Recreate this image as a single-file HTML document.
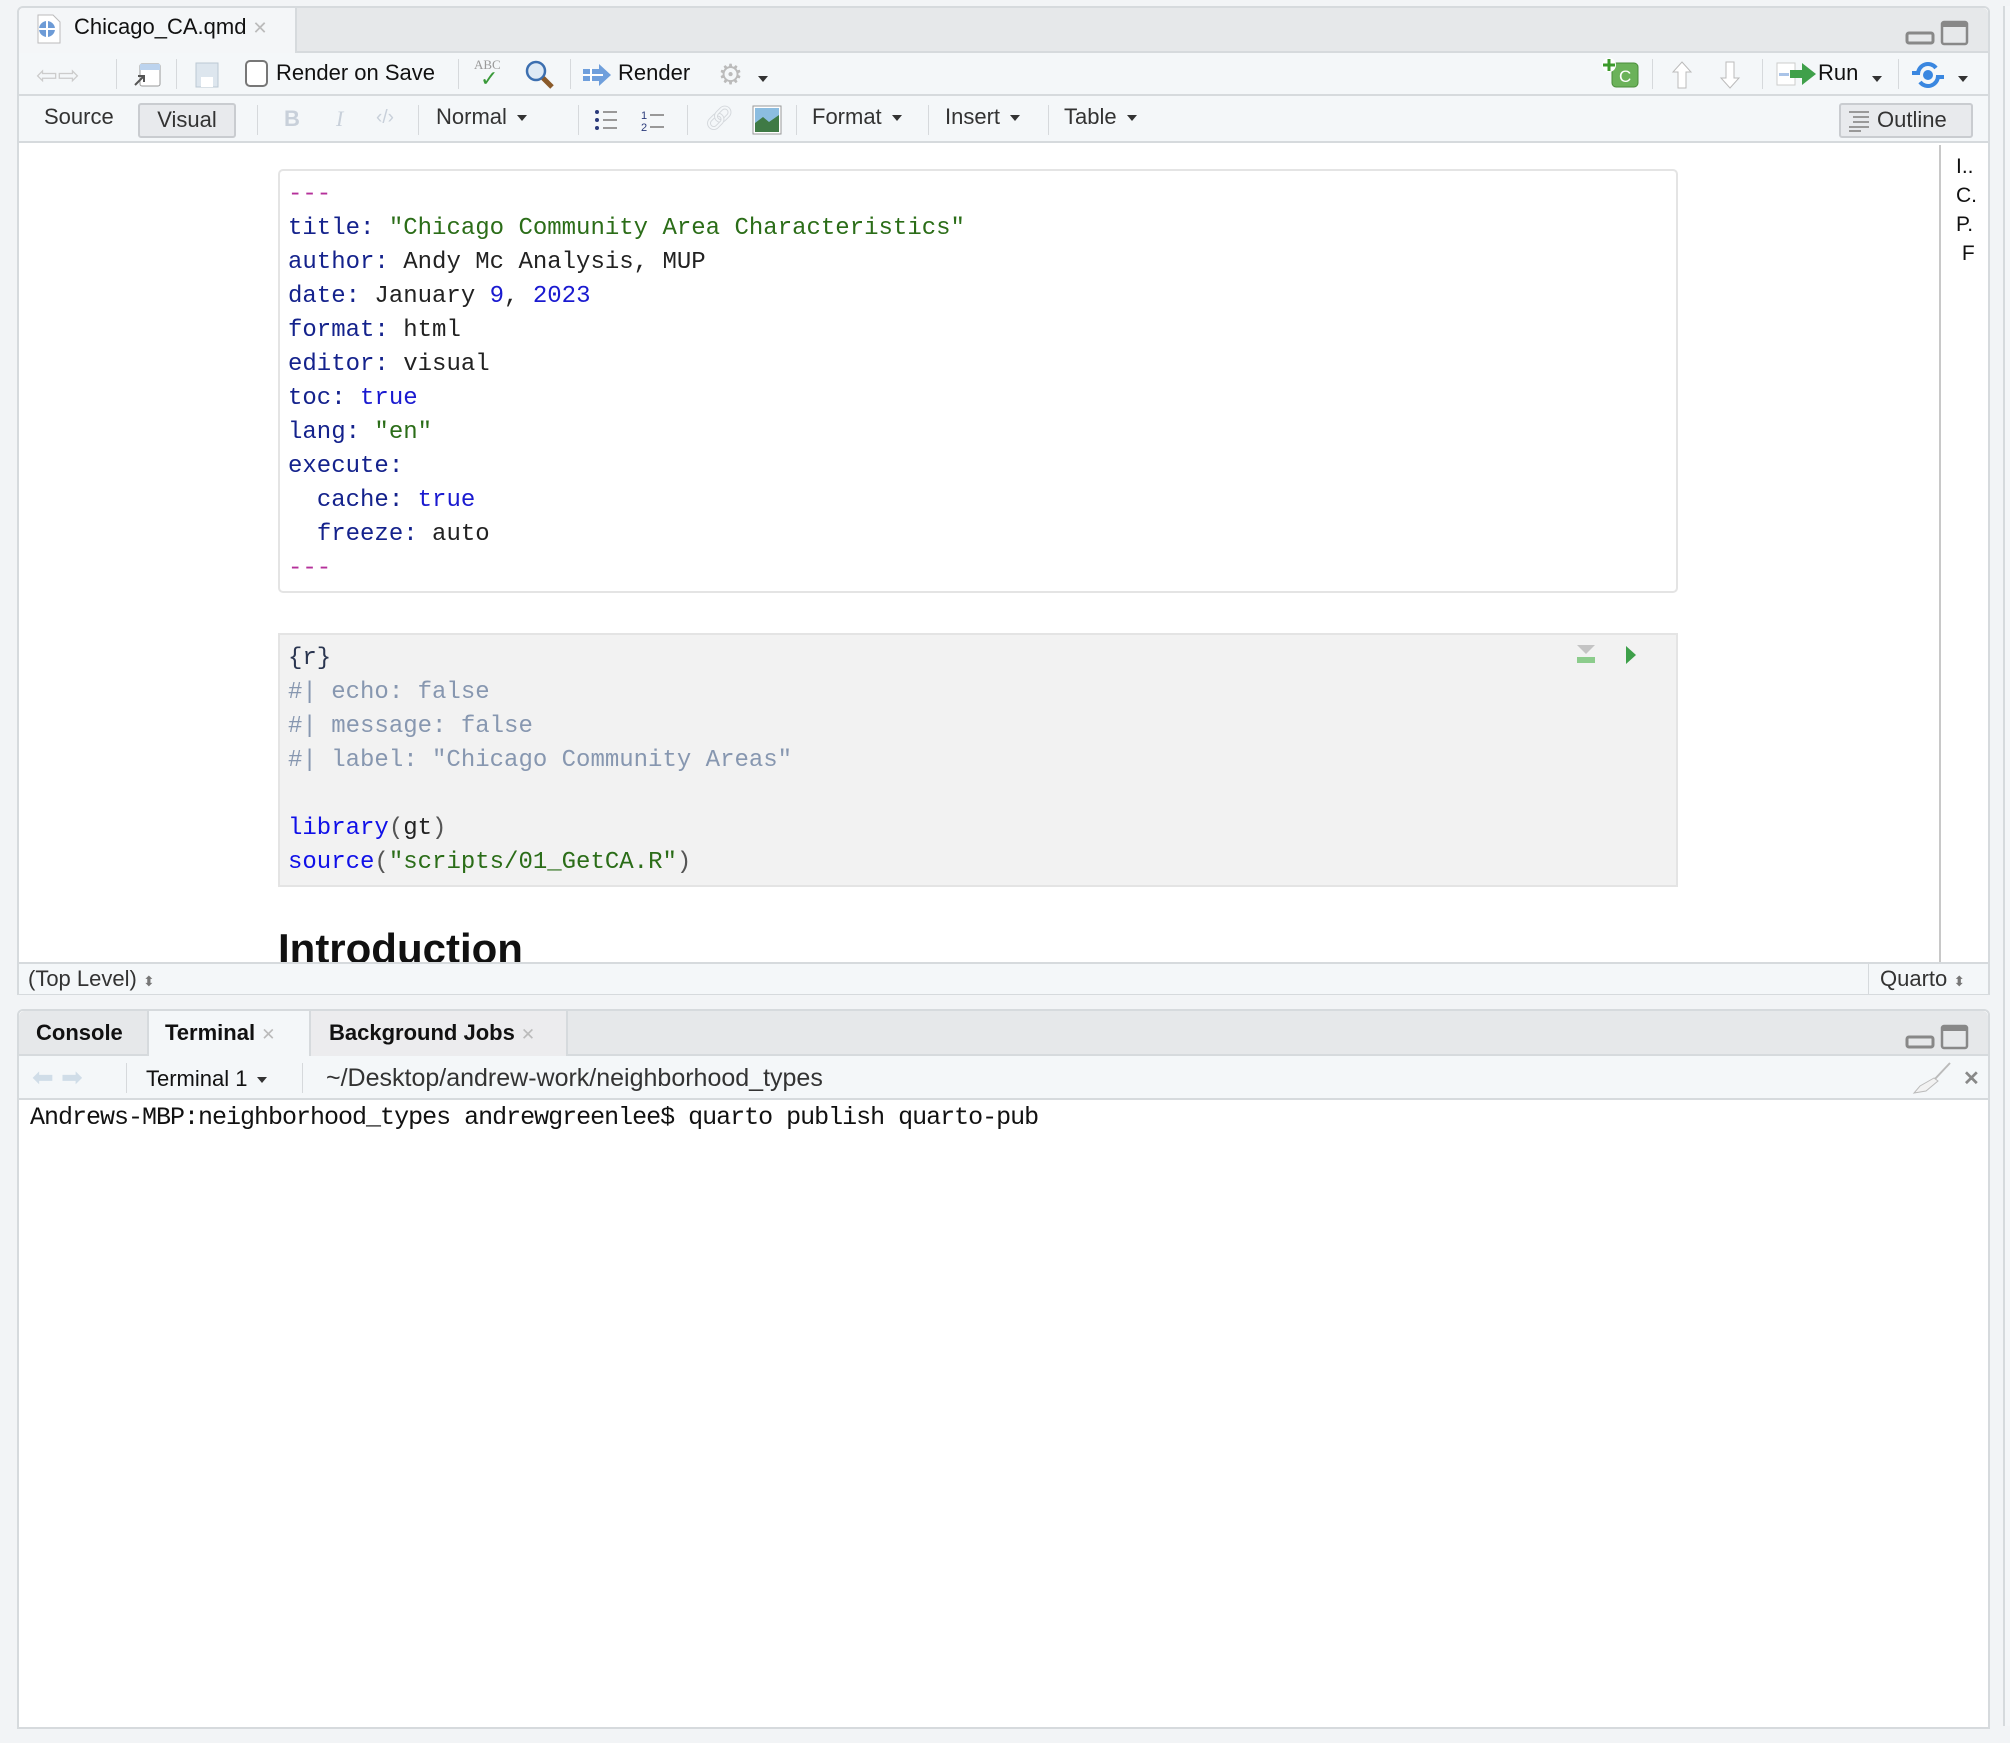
<!DOCTYPE html>
<html><head><meta charset="utf-8"><style>
*{box-sizing:border-box;margin:0;padding:0}
body{width:2010px;height:1743px;background:#f2f4f6;position:relative;overflow:hidden;font-family:"Liberation Sans",sans-serif;color:#222}
.a{position:absolute}
.ui{font-size:22px;color:#333;white-space:nowrap}
.mono{font-family:"Liberation Mono",monospace;font-size:24px;white-space:pre;line-height:34px}
.k{color:#14228c}.s{color:#2b6d18}.n{color:#1a1ad0}.m{color:#b5309a}.c{color:#8797b0}.f{color:#1010e8}.p{color:#555}
.sep{position:absolute;width:1px;height:30px;background:#d6d9dc}
.dd{display:inline-block;width:0;height:0;border-left:5px solid transparent;border-right:5px solid transparent;border-top:6px solid #333;vertical-align:middle;margin-left:10px}
</style></head><body>
<div class="a" style="left:17px;top:6px;width:1973px;height:989px;border:2px solid #d6dadd;border-radius:6px 6px 0 0;background:#fff"></div>
<div class="a" style="left:19px;top:8px;width:1969px;height:45px;background:#e6e8ea;border-bottom:2px solid #d6dadd;border-radius:5px 5px 0 0"></div>
<div class="a" style="left:19px;top:8px;width:278px;height:47px;background:#f4f6f8;border-right:2px solid #d6dadd;border-radius:5px 0 0 0"></div>
<svg class="a" style="left:36px;top:14px" width="26" height="30"><path d="M2 1h15l7 7v21H2z" fill="#fff" stroke="#bbb"/><circle cx="11" cy="15" r="8" fill="#6d9bd6"/><path d="M11 7v16M3 15h16" stroke="#fff" stroke-width="2"/></svg>
<div class="a ui" style="left:74px;top:14px;color:#111">Chicago_CA.qmd <span style="color:#bbb;font-size:18px">✕</span></div>
<svg class="a" style="left:1905px;top:20px" width="64" height="26"><rect x="2" y="13" width="26" height="10" rx="2" fill="none" stroke="#888" stroke-width="3"/><rect x="37" y="2" width="25" height="22" rx="2" fill="none" stroke="#888" stroke-width="2.5"/><rect x="37" y="2" width="25" height="5" fill="#888"/></svg>
<div class="a" style="left:19px;top:53px;width:1969px;height:43px;background:#f4f7f9;border-bottom:2px solid #d6dadd"></div>
<div class="a ui" style="left:36px;top:60px;color:#ccc;font-size:26px">⇦⇨</div>
<div class="sep" style="left:116px;top:59px"></div>
<svg class="a" style="left:132px;top:62px" width="30" height="26"><rect x="8" y="2" width="20" height="22" rx="2" fill="#fff" stroke="#999"/><rect x="8" y="2" width="20" height="6" fill="#bcd3ee"/><path d="M3 23l9-9M6 14h6v6" stroke="#555" fill="none" stroke-width="2"/></svg>
<div class="sep" style="left:176px;top:59px"></div>
<svg class="a" style="left:195px;top:62px" width="24" height="26"><rect x="1" y="1" width="22" height="24" fill="#dde6ee" stroke="#bcc8d4"/><rect x="6" y="15" width="12" height="10" fill="#fff"/></svg>
<div class="a" style="left:245px;top:60px;width:23px;height:27px;border:2px solid #777;border-radius:5px;background:#fff"></div>
<div class="a ui" style="left:276px;top:60px;color:#111">Render on Save</div>
<div class="sep" style="left:458px;top:59px"></div>
<div class="a" style="left:474px;top:57px;font-family:'Liberation Serif',serif;font-size:13px;color:#999">ABC</div>
<div class="a" style="left:480px;top:66px;color:#3a9a3a;font-size:22px">✓</div>
<svg class="a" style="left:524px;top:59px" width="32" height="32"><circle cx="12" cy="12" r="9" fill="#dfeaf5" stroke="#3c6fb0" stroke-width="2.5"/><path d="M19 19l9 9" stroke="#8a5a2a" stroke-width="5"/></svg>
<div class="sep" style="left:570px;top:59px"></div>
<svg class="a" style="left:582px;top:63px" width="30" height="24"><path d="M1 6h16V1l12 11-12 11v-5H1z" fill="#6f9fdc"/><path d="M9 5v14M1 12h20" stroke="#fff" stroke-width="2"/></svg>
<div class="a ui" style="left:618px;top:60px;color:#111">Render</div>
<div class="a" style="left:718px;top:58px;font-size:28px;color:#bbb">⚙</div>
<div class="a" style="left:758px;top:70px"><span class="dd" style="margin:0"></span></div>
<svg class="a" style="left:1602px;top:57px" width="38" height="32"><rect x="10" y="6" width="26" height="24" rx="4" fill="#6bb25a" stroke="#4a8c3a"/><text x="17" y="25" font-size="17" fill="#fff" font-family="Liberation Sans">C</text><circle cx="7" cy="8" r="7" fill="#fff"/><path d="M7 2v12M1 8h12" stroke="#3b9a2b" stroke-width="3"/></svg>
<div class="sep" style="left:1652px;top:59px"></div>
<svg class="a" style="left:1672px;top:60px" width="70" height="30"><path d="M10 2l9 10h-5v16H6V12H1z" fill="#fff" stroke="#bbb"/><path d="M58 28l9-10h-5V2h-8v16h-5z" fill="#fff" stroke="#bbb"/></svg>
<div class="sep" style="left:1762px;top:59px"></div>
<svg class="a" style="left:1776px;top:61px" width="44" height="26"><rect x="1" y="2" width="18" height="22" fill="#fff" stroke="#ccc"/><rect x="3" y="12" width="10" height="3" fill="#aac4e8"/><path d="M14 9h12V2l14 11-14 11v-7H14z" fill="#3fa04a"/></svg>
<div class="a ui" style="left:1818px;top:60px;color:#111">Run</div>
<div class="a" style="left:1872px;top:70px"><span class="dd" style="margin:0"></span></div>
<div class="sep" style="left:1898px;top:59px"></div>
<svg class="a" style="left:1912px;top:60px" width="32" height="30"><path d="M6 14a10 10 0 0 1 18-6" stroke="#3a87e0" stroke-width="4" fill="none"/><path d="M26 16a10 10 0 0 1-18 6" stroke="#3a87e0" stroke-width="4" fill="none"/><circle cx="16" cy="15" r="5" fill="#3a87e0"/><path d="M0 13h8M24 17h8" stroke="#3a87e0" stroke-width="4"/></svg>
<div class="a" style="left:1958px;top:70px"><span class="dd" style="margin:0"></span></div>
<div class="a" style="left:19px;top:96px;width:1969px;height:47px;background:#f4f7f9;border-bottom:2px solid #d6dadd"></div>
<div class="a ui" style="left:44px;top:104px">Source</div>
<div class="a ui" style="left:138px;top:103px;width:98px;height:35px;border:2px solid #c9ccd0;border-radius:3px;background:#e8eaed;text-align:center;line-height:29px">Visual</div>
<div class="sep" style="left:257px;top:105px"></div>
<div class="a ui" style="left:284px;top:106px;color:#c8d0da;font-weight:bold">B</div>
<div class="a ui" style="left:336px;top:106px;color:#c8d0da;font-style:italic;font-family:'Liberation Serif',serif">I</div>
<div class="a ui" style="left:376px;top:107px;color:#c8d0da;font-size:19px">‹/›</div>
<div class="sep" style="left:418px;top:105px"></div>
<div class="a ui" style="left:436px;top:104px">Normal<span class="dd"></span></div>
<div class="sep" style="left:578px;top:105px"></div>
<svg class="a" style="left:594px;top:108px" width="80" height="24"><g fill="#2a3a7a"><circle cx="3" cy="4" r="2"/><circle cx="3" cy="12" r="2"/><circle cx="3" cy="20" r="2"/></g><path d="M9 4h14M9 12h14M9 20h14" stroke="#999" stroke-width="2"/><text x="47" y="11" font-size="11" fill="#2a3a7a" font-family="Liberation Sans">1</text><text x="47" y="23" font-size="11" fill="#2a3a7a" font-family="Liberation Sans">2</text><path d="M56 7h14M56 19h14" stroke="#999" stroke-width="2"/></svg>
<div class="sep" style="left:687px;top:105px"></div>
<div class="a" style="left:704px;top:104px;color:#d4d8dc;font-size:24px">🔗︎</div>
<svg class="a" style="left:752px;top:105px" width="30" height="30"><rect x="1" y="1" width="28" height="28" fill="#fff" stroke="#999"/><rect x="3" y="3" width="24" height="24" fill="#8cbde0"/><path d="M3 27V18l8-6 6 5 10-7v17z" fill="#3f7a45"/></svg>
<div class="sep" style="left:796px;top:105px"></div>
<div class="a ui" style="left:812px;top:104px">Format<span class="dd"></span></div>
<div class="sep" style="left:928px;top:105px"></div>
<div class="a ui" style="left:945px;top:104px">Insert<span class="dd"></span></div>
<div class="sep" style="left:1048px;top:105px"></div>
<div class="a ui" style="left:1064px;top:104px">Table<span class="dd"></span></div>
<div class="a ui" style="left:1839px;top:103px;width:134px;height:35px;border:2px solid #c9ccd0;border-radius:3px;background:#e8eaed;line-height:29px;padding-left:36px">Outline</div>
<svg class="a" style="left:1847px;top:110px" width="26" height="22"><path d="M2 2h20M6 7h16M6 12h16M2 17h20M2 21h12" stroke="#999" stroke-width="2"/></svg>
<div class="a" style="left:1939px;top:145px;width:2px;height:817px;background:#c8c8c8"></div>
<div class="a ui" style="left:1956px;top:152px;color:#111;line-height:29px;font-size:21px">I..<br>C.<br>P.<br>&nbsp;F</div>
<div class="a" style="left:278px;top:169px;width:1400px;height:424px;border:2px solid #e4e4e4;border-radius:5px;background:#fff"></div>
<div class="a mono" style="left:288px;top:178px"><span class="m">---</span>
<span class="k">title:</span> <span class="s">"Chicago Community Area Characteristics"</span>
<span class="k">author:</span> Andy Mc Analysis, MUP
<span class="k">date:</span> January <span class="n">9</span>, <span class="n">2023</span>
<span class="k">format:</span> html
<span class="k">editor:</span> visual
<span class="k">toc:</span> <span class="n">true</span>
<span class="k">lang:</span> <span class="s">"en"</span>
<span class="k">execute:</span>
  <span class="k">cache:</span> <span class="n">true</span>
  <span class="k">freeze:</span> auto
<span class="m">---</span></div>
<div class="a" style="left:278px;top:633px;width:1400px;height:254px;border:2px solid #e4e4e4;background:#f2f2f2"></div>
<svg class="a" style="left:1576px;top:644px" width="80" height="24"><path d="M1 1h18l-9 9z" fill="#c4c4c4"/><rect x="1" y="13" width="18" height="6" fill="#8ccc8c"/><path d="M50 2l10 9-10 9z" fill="#3ea04a"/></svg>
<div class="a mono" style="left:288px;top:642px"><span style="color:#2a3550">{r}</span>
<span class="c">#| echo: false</span>
<span class="c">#| message: false</span>
<span class="c">#| label: "Chicago Community Areas"</span>

<span class="f">library</span><span class="p">(</span>gt<span class="p">)</span>
<span class="f">source</span><span class="p">(</span><span class="s">"scripts/01_GetCA.R"</span><span class="p">)</span></div>
<div class="a" style="left:19px;top:925px;width:1918px;height:37px;overflow:hidden"><div class="a" style="left:259px;top:0;font-size:42px;font-weight:bold;color:#111;white-space:nowrap">Introduction</div></div>
<div class="a" style="left:19px;top:962px;width:1969px;height:32px;background:#f4f7f9;border-top:2px solid #d6dadd"></div>
<div class="a ui" style="left:28px;top:966px;color:#333">(Top Level) <span style="font-size:14px;color:#777">⬍</span></div>
<div class="a" style="left:1868px;top:964px;width:1px;height:30px;background:#d6dadd"></div>
<div class="a ui" style="left:1880px;top:966px;color:#333">Quarto <span style="font-size:14px;color:#777">⬍</span></div>
<div class="a" style="left:17px;top:1009px;width:1973px;height:720px;border:2px solid #d6dadd;border-radius:6px 6px 0 0;background:#fff"></div>
<div class="a" style="left:19px;top:1011px;width:1969px;height:45px;background:#e6e8ea;border-bottom:2px solid #d6dadd;border-radius:5px 5px 0 0"></div>
<div class="a ui" style="left:36px;top:1020px;font-weight:bold;color:#111">Console</div>
<div class="a" style="left:147px;top:1011px;width:164px;height:47px;background:#f4f7f9;border-left:2px solid #d6dadd;border-right:2px solid #d6dadd"></div>
<div class="a ui" style="left:165px;top:1020px;font-weight:bold;color:#111">Terminal <span style="color:#bbb;font-weight:normal;font-size:17px">✕</span></div>
<div class="a" style="left:311px;top:1011px;width:257px;height:45px;background:#ececee;border-right:2px solid #d6dadd"></div>
<div class="a ui" style="left:329px;top:1020px;font-weight:bold;color:#111">Background Jobs <span style="color:#bbb;font-weight:normal;font-size:17px">✕</span></div>
<svg class="a" style="left:1905px;top:1024px" width="64" height="26"><rect x="2" y="13" width="26" height="10" rx="2" fill="none" stroke="#888" stroke-width="3"/><rect x="37" y="2" width="25" height="22" rx="2" fill="none" stroke="#888" stroke-width="2.5"/><rect x="37" y="2" width="25" height="5" fill="#888"/></svg>
<div class="a" style="left:19px;top:1056px;width:1969px;height:44px;background:#f4f7f9;border-bottom:2px solid #d6dadd"></div>
<div class="a ui" style="left:32px;top:1062px;color:#d0dde8;font-size:26px">⬅ ➡</div>
<div class="sep" style="left:126px;top:1063px"></div>
<div class="a ui" style="left:146px;top:1066px;color:#111">Terminal 1<span class="dd"></span></div>
<div class="sep" style="left:302px;top:1063px"></div>
<div class="a ui" style="left:326px;top:1064px;color:#333;font-size:25px">~/Desktop/andrew-work/neighborhood_types</div>
<svg class="a" style="left:1912px;top:1062px" width="40" height="32"><path d="M38 1L22 18" stroke="#bbb" stroke-width="2"/><path d="M22 16l-14 8-6 7 12-2 12-10z" fill="#f2f2f2" stroke="#bbb"/></svg>
<div class="a" style="left:1963px;top:1066px;color:#888;font-size:20px;font-weight:bold">✕</div>
<div class="a" style="left:30px;top:1100px;font-family:'Liberation Mono',monospace;font-size:25px;letter-spacing:-1px;line-height:36px;color:#111;white-space:pre">Andrews-MBP:neighborhood_types andrewgreenlee$ quarto publish quarto-pub</div>
<div class="a" style="left:2003px;top:6px;width:7px;height:1720px;border-left:2px solid #d6dadd;background:#f4f6f8"></div>
</body></html>
